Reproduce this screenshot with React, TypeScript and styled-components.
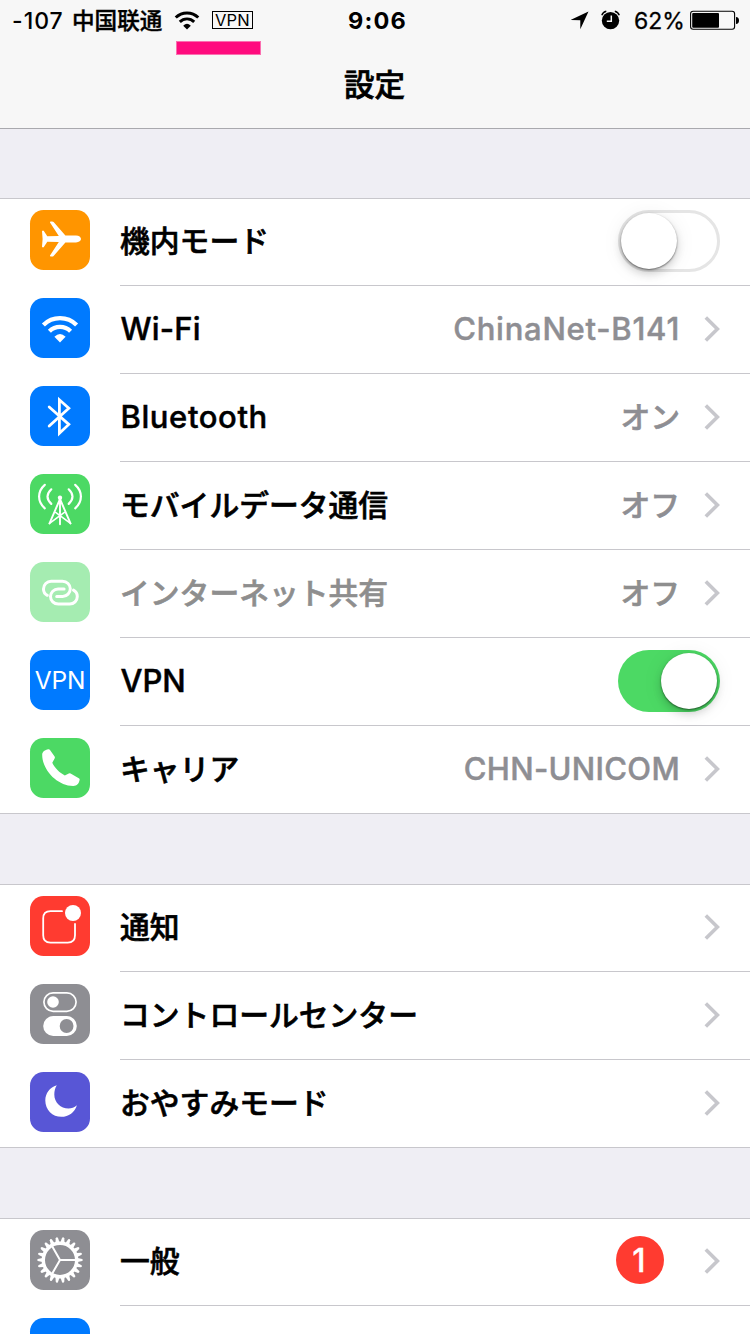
import React from "react";
import styled, { createGlobalStyle } from "styled-components";

const GlobalStyle = createGlobalStyle`
  * { box-sizing: border-box; }
  html, body { margin: 0; background: #efeef4; }
  body { width: 750px; height: 1334px; overflow: hidden; }
`;

const latin = `Inter, "Noto Sans CJK JP", sans-serif`;
const japanese = `"Noto Sans CJK JP", Inter, sans-serif`;

const Screen = styled.main`
  width: 750px;
  height: 1334px;
  overflow: hidden;
  background: #efeef4;
  font-family: ${latin};
  color: #000;
`;

const Header = styled.header`
  position: relative;
  height: 129px;
  background: #f7f7f7;
  border-bottom: 1px solid #a9a9ae;
`;

const StatusBar = styled.div`
  display: grid;
  grid-template-columns: 348px 1fr auto;
  align-items: center;
  height: 40px;
  padding: 0 11px 0 0;
  white-space: nowrap;
`;

const StatusLeft = styled.div`
  display: flex;
  align-items: center;
  padding-left: 12px;
`;

const StatusRight = styled.div`
  display: flex;
  align-items: center;
`;

const Signal = styled.span`
  width: 60px;
  padding-top: 1px;
  font-size: 23px;
  font-weight: 500;
  letter-spacing: 1px;
`;

const Carrier = styled.span`
  width: 102px;
  font: 500 22.6px/40px "Noto Sans CJK SC", sans-serif;
  -webkit-text-stroke: 0.4px;
`;

const VpnBox = styled.span`
  display: flex;
  align-items: center;
  justify-content: center;
  width: 41px;
  height: 18px;
  margin-left: 12px;
  border: 1px solid #000;
  font-size: 16.5px;
  font-weight: 400;
  letter-spacing: 0.2px;
`;

const Clock = styled.span`
  padding-top: 1px;
  font-size: 23.5px;
  font-weight: 700;
  letter-spacing: 1.2px;
`;

const Percent = styled.span`
  width: 56px;
  padding-top: 1px;
  font-size: 23px;
  font-weight: 400;
  -webkit-text-stroke: 0.3px;
`;

const Highlight = styled.div`
  position: absolute;
  left: 176px;
  top: 41px;
  width: 85px;
  height: 14px;
  background: #ff0b7e;
  border: 1px solid #fb6fb0;
`;

const Title = styled.h1`
  height: 88px;
  margin: 0;
  padding-right: 1px;
  text-align: center;
  font: 500 30.5px/86px ${japanese};
  -webkit-text-stroke: 0.7px;
`;

const Groups = styled.div`
  display: flex;
  flex-direction: column;
  gap: 70px;
  padding-top: 69px;
`;

const Group = styled.section`
  background: #fff;
  border-top: 1px solid #c8c7cc;
`;

const Row = styled.div`
  display: flex;
  height: 88px;
  padding-left: 30px;
  &:first-child { margin-top: -1px; }
  &:last-child { border-bottom: 1px solid #c8c7cc; }
`;

const Tile = styled.span<{ $color: string }>`
  flex: none;
  width: 60px;
  height: 60px;
  margin: 12px 30px 0 0;
  border-radius: 13.5px;
  overflow: hidden;
  background: ${(p) => p.$color};
  svg { display: block; }
`;

const VpnTile = styled.span`
  display: block;
  color: #fff;
  text-align: center;
  font-size: 24.5px;
  font-weight: 400;
  letter-spacing: -0.2px;
  line-height: 60px;
`;

const Body = styled.div`
  flex: 1;
  display: flex;
  align-items: center;
  padding-right: 30px;
  border-bottom: 1px solid #c8c7cc;
  ${Row}:last-child & { border-bottom: 0; }
`;

const Label = styled.span<{ $jp?: boolean; $dim?: boolean; $track?: number }>`
  flex: 1;
  font-family: ${(p) => (p.$jp ? japanese : latin)};
  font-size: ${(p) => (p.$jp ? 29.8 : 31)}px;
  font-weight: 500;
  -webkit-text-stroke: ${(p) => (p.$jp ? 0.6 : 0.45)}px;
  line-height: 80px;
  margin-bottom: ${(p) => (p.$jp ? 5 : 2)}px;
  padding-left: ${(p) => (p.$jp ? 0 : 0.5)}px;
  letter-spacing: ${(p) => p.$track ?? 0}px;
  color: ${(p) => (p.$dim ? "#8e8e8e" : "#000")};
`;

const Value = styled(Label)`
  flex: none;
  color: ${(p) => (p.$dim ? "#8e8e8e" : "#8e8e93")};
`;

const Badge = styled.span`
  width: 48px;
  height: 48px;
  margin: 0 16px 3px 0;
  padding-right: 2px;
  border-radius: 50%;
  background: #ff3b30;
  color: #fff;
  font-size: 32px;
  font-weight: 500;
  -webkit-text-stroke: 0.3px;
  line-height: 49px;
  text-align: center;
`;

const Track = styled.span<{ $on: boolean }>`
  display: flex;
  justify-content: ${(p) => (p.$on ? "flex-end" : "flex-start")};
  width: 102px;
  height: 62px;
  margin-bottom: 1px;
  padding: ${(p) => (p.$on ? "3px" : "0")};
  border: ${(p) => (p.$on ? "0" : "3px solid #e5e5e5")};
  border-radius: 31px;
  background: ${(p) => (p.$on ? "#4cd964" : "#fff")};
`;

const Knob = styled.span`
  width: 56px;
  height: 56px;
  border-radius: 50%;
  background: #fff;
  box-shadow: 0 1px 2px rgba(0, 0, 0, 0.5), 0 5px 8px rgba(0, 0, 0, 0.16), 0 2px 22px rgba(0, 0, 0, 0.07);
`;

const ChevronSvg = styled.svg`
  display: block;
  margin: 0 0 1px 24px;
`;

const Chevron = () => (
  <ChevronSvg width="16" height="28" viewBox="0 0 16 28" fill="none">
    <path d="M1.8 2.4 13.4 14 1.8 25.6" stroke="#c7c7cc" strokeWidth="3.6" />
  </ChevronSvg>
);

const Glyph = ({ children }: { children: React.ReactNode }) => (
  <svg width="60" height="60" viewBox="0 0 60 60" fill="none" strokeLinecap="round" strokeLinejoin="round">
    {children}
  </svg>
);

const WifiShape = ({ color }: { color: string }) => (
  <>
    <path d="M13.4 26.9a23.5 23.5 0 0 1 33.2 0M19.4 33.2a15 15 0 0 1 21.2 0" stroke={color} strokeWidth="4.3" strokeLinecap="butt" fill="none" />
    <path d="M24.4 38.8Q30 33.2 35.6 38.8L30 44.5Z" fill={color} />
  </>
);

const Plane = () => (
  <Glyph>
    <path
      fill="#fff"
      d="M12 21.2q1-1.3 2 0L17.3 26.3 28.8 26 20 12.6q-.3-1.2.8-1.2h1.4q.8 0 1.4.7L35.4 25.6H46c3 0 5 1.7 5 3.4s-2 3.4-5 3.4H35.4L23.6 45.9q-.6.7-1.4.7h-1.4q-1.1 0-.8-1.2L28.8 32 17.3 31.7 14 36.8q-1 1.3-2 0L12.6 29Z"
    />
  </Glyph>
);

const Wifi = () => (
  <Glyph>
    <WifiShape color="#fff" />
  </Glyph>
);

const Bluetooth = () => (
  <Glyph>
    <path d="M19.2 21 38.8 38.4 29.4 47.2V13.8L38.8 22.2 19.2 40" stroke="#fff" strokeWidth="2.8" strokeLinejoin="miter" />
  </Glyph>
);

const Tower = () => (
  <Glyph>
    <g stroke="#fff" strokeWidth="2.2">
      <path d="M21.3 15.3q-7.6 7.2 0 14.6M38.7 15.3q7.6 7.2 0 14.6M14.8 10.8c-7.6 6.6-7.6 17 0 23.6M45.2 10.8c7.6 6.6 7.6 17 0 23.6" />
      <path d="M29.6 26 19.5 49.4M30.4 26 40.5 49.4M30 25V50.2" strokeWidth="1.9" />
      <path d="M19.5 49.4 34.4 38.4M40.5 49.4 25.6 38.4" strokeWidth="1.6" />
    </g>
    <circle cx="30" cy="23.8" r="2.2" fill="#fff" />
  </Glyph>
);

const Hotspot = () => (
  <Glyph>
    <g stroke="#fff" strokeWidth="3">
      <path d="M17.3 33.3C14.8 32 13.5 29.6 13.5 26.9 13.5 22.7 16.9 19.3 21.1 19.3H32.5C36.9 19.3 40.3 22.7 40.3 26.8S36.9 34.4 32.7 34.4H26.7" />
      <path d="M43.5 28.1C46 29.4 47.3 31.8 47.3 34.5 47.3 38.7 43.9 42.1 39.7 42.1H28.3C23.9 42.1 20.5 38.7 20.5 34.6S23.9 27 28.1 27H34.1" />
    </g>
  </Glyph>
);

const Phone = () => (
  <Glyph>
    <path
      fill="#fff"
      d="M12.2 16.6C12.3 13.6 15 11.9 18.3 11.2Q19.4 11 20 11.9L24.6 18.6Q25.2 19.6 24.6 20.6L22.3 24.8C24.6 30 29.7 34.9 34.8 37.4L38.8 35.5Q39.7 35.1 40.6 35.5L48.8 40.2Q49.9 40.9 49.6 42C48.9 45.7 47 47.9 43.3 47.9 27 48 12 31.5 12.2 16.6Z"
    />
  </Glyph>
);

const Notifications = () => (
  <Glyph>
    <path d="M32 15.2H20.5Q13.2 15.2 13.2 22.5V39.2Q13.2 46.6 20.5 46.6H37.7Q45 46.6 45 39.2V28" stroke="#fff" strokeWidth="1.8" />
    <circle cx="43" cy="17" r="8" fill="#fff" />
  </Glyph>
);

const Controls = () => (
  <Glyph>
    <rect x="13.9" y="8.9" width="32.2" height="18.4" rx="9.2" stroke="#fff" strokeWidth="1.7" />
    <circle cx="23" cy="18" r="5.8" fill="#fff" />
    <rect x="13.2" y="32" width="33.6" height="20" rx="10" fill="#fff" />
    <circle cx="36.6" cy="42" r="6.9" fill="#8e8e93" />
  </Glyph>
);

const Moon = () => (
  <Glyph>
    <path fill="#fff" d="M26.8 13.2C19.8 15.2 15.3 21.4 15.3 28.4 15.3 37.6 22.4 44.8 31.4 44.8 38.6 44.8 44.9 40.4 46.9 33.2 44.2 35.6 41.6 36.5 38.5 36.5 30.7 36.5 24.3 30.5 24.3 22.4 24.3 19 25.1 15.8 26.8 13.2Z" />
  </Glyph>
);

const teeth = Array.from({ length: 22 }, (_, i) => (i * 360) / 22);

const Gear = () => (
  <Glyph>
    <circle cx="30" cy="30" r="16.7" stroke="#fff" strokeWidth="3.4" />
    {teeth.map((a) => (
      <path key={a} d="M47.5 27.9 52.2 28.9Q53.6 30 52.2 31.1L47.5 32.1Z" fill="#fff" transform={`rotate(${a} 30 30)`} />
    ))}
    <path d="M30 30H46M30 30 22 16.1M30 30 22 43.9" stroke="#fff" strokeWidth="2" />
  </Glyph>
);

interface Item {
  label: string;
  jp?: boolean;
  dim?: boolean;
  track?: number;
  color: string;
  icon?: React.ReactNode;
  value?: string;
  valueJp?: boolean;
  valueTrack?: number;
  toggle?: boolean;
  badge?: string;
}

const groups: Item[][] = [
  [
    { label: "機内モード", jp: true, color: "#ff9500", icon: <Plane />, toggle: false },
    { label: "Wi-Fi", track: 0.2, color: "#007aff", icon: <Wifi />, value: "ChinaNet-B141", valueTrack: 0.75 },
    { label: "Bluetooth", track: 0.6, color: "#007aff", icon: <Bluetooth />, value: "オン", valueJp: true },
    { label: "モバイルデータ通信", jp: true, color: "#4cd964", icon: <Tower />, value: "オフ", valueJp: true },
    { label: "インターネット共有", jp: true, dim: true, color: "#a5ecb1", icon: <Hotspot />, value: "オフ", valueJp: true, },
    { label: "VPN", color: "#007aff", icon: <VpnTile>VPN</VpnTile>, toggle: true },
    { label: "キャリア", jp: true, color: "#4cd964", icon: <Phone />, value: "CHN-UNICOM", valueTrack: 0.3 },
  ],
  [
    { label: "通知", jp: true, color: "#ff3b30", icon: <Notifications /> },
    { label: "コントロールセンター", jp: true, color: "#8e8e93", icon: <Controls /> },
    { label: "おやすみモード", jp: true, color: "#5856d6", icon: <Moon /> },
  ],
  [
    { label: "一般", jp: true, color: "#8e8e93", icon: <Gear />, badge: "1" },
    { label: "", color: "#007aff" },
  ],
];

const SettingRow = ({ item }: { item: Item }) => (
  <Row>
    <Tile $color={item.color}>{item.icon}</Tile>
    <Body>
      <Label $jp={item.jp} $dim={item.dim} $track={item.track}>{item.label}</Label>
      {item.value && (
        <Value $jp={item.valueJp} $dim={item.dim} $track={item.valueTrack}>{item.value}</Value>
      )}
      {item.badge && <Badge>{item.badge}</Badge>}
      {item.toggle === undefined ? (
        <Chevron />
      ) : (
        <Track $on={item.toggle}>
          <Knob />
        </Track>
      )}
    </Body>
  </Row>
);

export default function App() {
  return (
    <>
      <GlobalStyle />
      <Screen>
        <Header>
          <StatusBar>
            <StatusLeft>
              <Signal>-107</Signal>
              <Carrier>中国联通</Carrier>
              <svg width="26" height="19" viewBox="11 17.2 38 28">
                <WifiShape color="#000" />
              </svg>
              <VpnBox>VPN</VpnBox>
            </StatusLeft>
            <Clock>9:06</Clock>
            <StatusRight>
              <svg width="63" height="24" viewBox="571 8 63 24">
                <path d="M570.5 20 588.5 11.5 580.3 29.3V20.3Z" />
                <circle cx="610.5" cy="20.6" r="8.7" />
                <path d="M601.8 15.2Q603 12 606.3 11.3M614.8 11.3Q618 12 619.3 15.2" fill="none" stroke="#000" strokeWidth="1.4" />
                <path d="M611.3 15.5V21.3H606.8" fill="none" stroke="#f7f7f7" strokeWidth="1.5" />
              </svg>
              <Percent>62%</Percent>
              <svg width="49" height="20" viewBox="0 0 49 20">
                <rect x=".6" y="1.3" width="44" height="18" rx="2.5" fill="none" stroke="#000" strokeWidth="1.1" />
                <rect x="2.2" y="2.9" width="26.8" height="14.8" rx="1" />
                <path d="M46 7Q49 7.3 49 10.5T46 14Z" />
              </svg>
            </StatusRight>
          </StatusBar>
          <Title>設定</Title>
          <Highlight />
        </Header>
        <Groups>
          {groups.map((items, g) => (
            <Group key={g}>
              {items.map((item, i) => (
                <SettingRow key={i} item={item} />
              ))}
            </Group>
          ))}
        </Groups>
      </Screen>
    </>
  );
}
